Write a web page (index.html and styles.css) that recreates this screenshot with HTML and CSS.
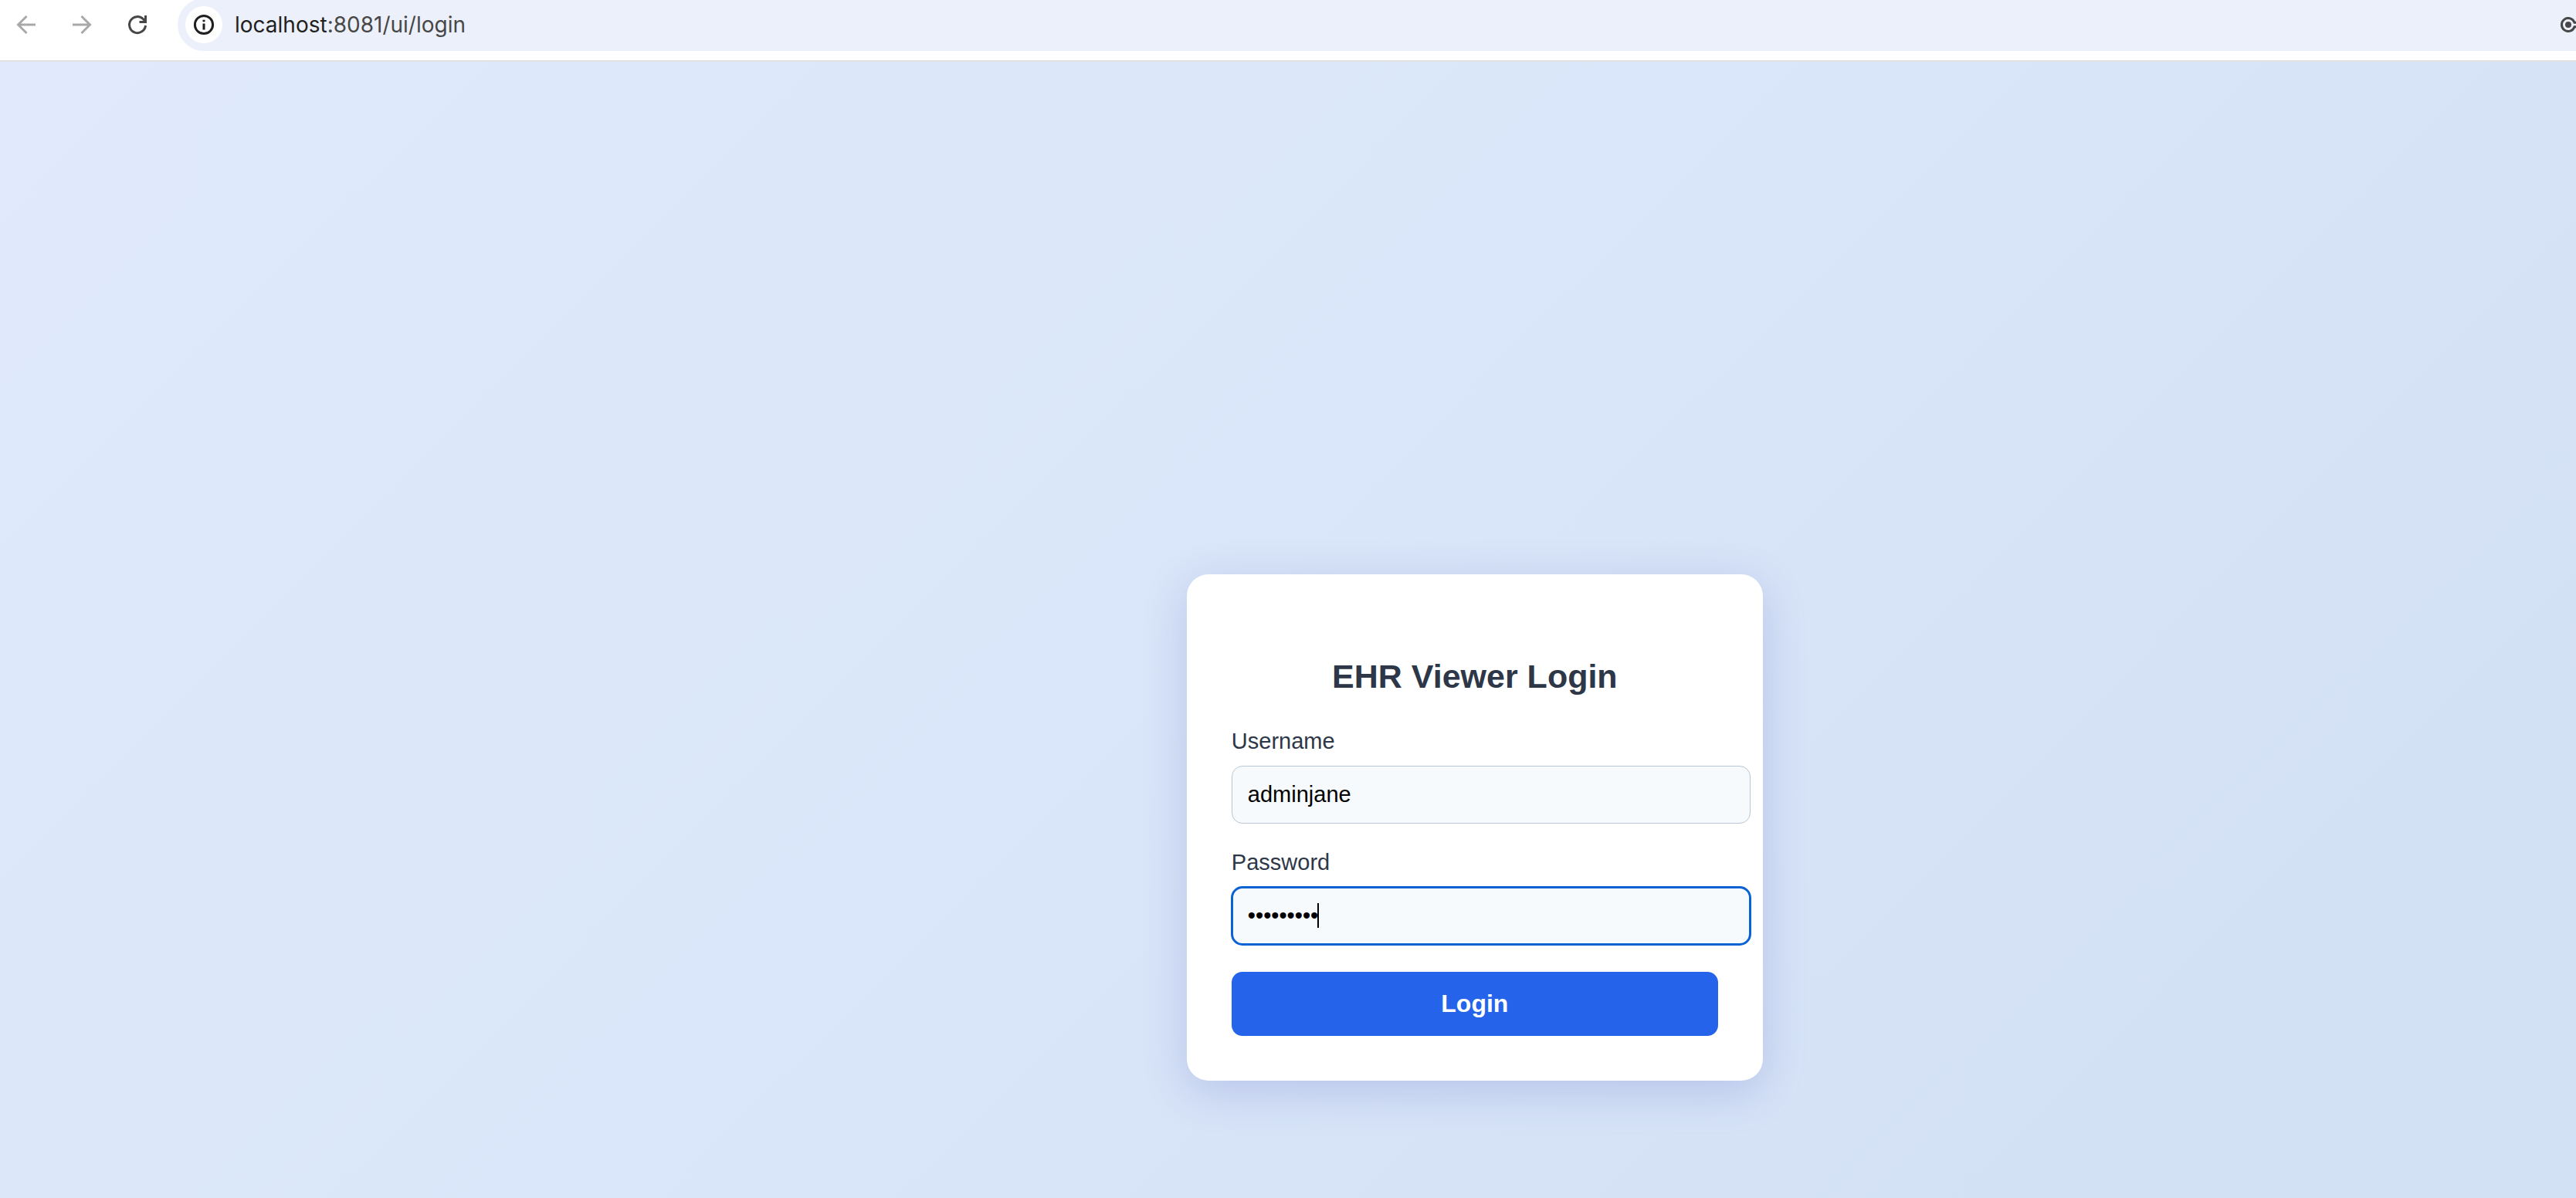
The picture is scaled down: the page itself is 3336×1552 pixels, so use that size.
FILE: index.html
```html
<!DOCTYPE html>
<html lang="en">
<head>
<meta charset="utf-8">
<title>EHR Viewer Login</title>
<link rel="stylesheet" href="styles.css">
</head>
<body>
<header class="toolbar">
  <nav class="nav-buttons" aria-label="Browser navigation">
    <button class="icon-button muted" type="button" aria-label="Back">
      <svg viewBox="0 0 32 32"><path d="M28 16H6M16.500 5L5.500 16L16.500 27"/></svg>
    </button>
    <button class="icon-button muted" type="button" aria-label="Forward">
      <svg viewBox="0 0 32 32"><path d="M4 16H26M15.500 5L26.500 16L15.500 27"/></svg>
    </button>
    <button class="icon-button" type="button" aria-label="Reload">
      <svg viewBox="0 0 32 32"><path d="M26.500 17A10.500 10.500 0 1 1 23.500 8.700L26 11.500M26.500 4V12.500H18.500"/></svg>
    </button>
  </nav>
  <div class="address-bar">
    <button class="site-info" type="button" aria-label="Site information">
      <svg viewBox="0 0 32 32"><circle cx="16" cy="16" r="11.600"/><path d="M16 14.500V22.500M16 9.700V12.300"/></svg>
    </button>
    <span class="url"><span class="host">localhost</span>:8081/ui/login</span>
    <svg class="key-icon" viewBox="0 0 20 20" aria-hidden="true"><circle class="key-dot" cx="10" cy="10" r="4"/><path d="M20 7.300H18A8.500 8.500 0 1 0 18 12.700H20"/></svg>
  </div>
</header>
<main class="page">
  <form class="card">
    <h1 class="title">EHR Viewer Login</h1>
    <label class="label" for="username">Username</label>
    <input class="field" id="username" type="text" value="adminjane">
    <label class="label" for="password">Password</label>
    <div class="password-box">
      <input class="field focused" id="password" type="password" value="password1">
      <span class="caret"></span>
    </div>
    <button class="submit" type="submit">Login</button>
  </form>
</main>
</body>
</html>
```
FILE: styles.css
```css
* {
  box-sizing: border-box;
}

body {
  margin: 0;
  min-height: 100vh;
  display: flex;
  flex-direction: column;
  font-family: "Liberation Sans", Arial, sans-serif;
  color: #2d3748;
}

button {
  border: 0;
  padding: 0;
  font-family: inherit;
}

/* Browser toolbar */
.toolbar {
  display: flex;
  gap: 28px;
  height: 80px;
  padding: 0 0 14px 18px;
  background: #ffffff;
  border-bottom: 2px solid #e0e1e2;
}

.nav-buttons {
  display: flex;
  align-items: center;
  gap: 40px;
  padding-right: 8px;
}

.icon-button {
  width: 32px;
  height: 32px;
  background: none;
  color: #474747;
}

.muted {
  color: #a9a9a9;
}

.icon-button svg,
.site-info svg {
  display: block;
  width: 32px;
  height: 32px;
  fill: none;
  stroke: currentColor;
  stroke-width: 3;
}

.address-bar {
  flex: 1;
  display: flex;
  align-items: center;
  margin: -2px 0;
  padding-left: 10px;
  background: #ecf0fa;
  border-radius: 34px 0 0 34px;
}

.site-info {
  display: grid;
  place-items: center;
  width: 48px;
  height: 48px;
  border-radius: 50%;
  background: #ffffff;
  color: #1f1f1f;
}

.url {
  flex: 1;
  padding-left: 16px;
  font: 28px/36px Inter, sans-serif;
  color: #474747;
}

.host {
  color: #1f1f1f;
}

.key-icon {
  width: 20px;
  height: 20px;
  fill: none;
  stroke: #474747;
  stroke-width: 3;
}

.key-dot {
  fill: #474747;
  stroke: none;
}

/* Login page */
.page {
  flex: 1;
  display: flex;
  justify-content: center;
  align-items: flex-end;
  padding: 0 0 152px 14.5%;
  background: linear-gradient(135deg, #e0eafc, #cfdef3) 0 0 / 115% 135% no-repeat;
}

.card {
  display: flex;
  flex-direction: column;
  width: 746px;
  padding: 102px 58px 58px;
  background: #ffffff;
  border-radius: 28px;
  box-shadow: 0 14px 58px rgba(60, 72, 180, 0.2);
}

.title {
  margin: 0 0 36px;
  font-size: 43px;
  line-height: 60px;
  text-align: center;
}

.label {
  margin-bottom: 14px;
  font-size: 29px;
  line-height: 36px;
}

.field {
  display: block;
  width: 672px;
  height: 75px;
  margin: 0 0 32px;
  padding: 0 20px;
  border: 1px solid #b9c6d3;
  border-radius: 14px;
  background: #f6fafd;
  color: #000000;
  font: 29px/36px "Liberation Sans", Arial, sans-serif;
}

.password-box {
  position: relative;
  width: 672px;
  margin-bottom: 35px;
}

.focused {
  margin: 0;
  border-color: #0b62d2;
  outline: 3px solid #0b62d2;
  outline-offset: -2px;
}

.caret {
  position: absolute;
  left: 111px;
  top: 21px;
  width: 2px;
  height: 32px;
  background: #000000;
}

.submit {
  height: 83px;
  border-radius: 14px;
  background: #2563eb;
  color: #ffffff;
  font-size: 32px;
  font-weight: bold;
}
```
